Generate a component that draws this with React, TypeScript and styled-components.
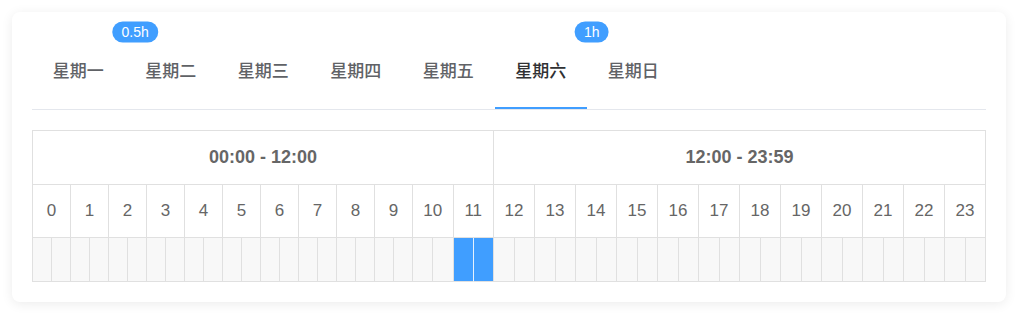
import { useState } from 'react';
import styled, { createGlobalStyle } from 'styled-components';

const GlobalStyle = createGlobalStyle`
	html, body {
		margin: 0;
		padding: 0;
		background: #fff;
	}
	body {
		font-family: 'Liberation Sans', Arial, 'Noto Sans CJK SC', sans-serif;
	}
	* {
		box-sizing: border-box;
	}
`;

type Day = {
	label: string;
	slots: number[];
};

const days: Day[] = [
	{ label: '星期一', slots: [17] },
	{ label: '星期二', slots: [] },
	{ label: '星期三', slots: [] },
	{ label: '星期四', slots: [] },
	{ label: '星期五', slots: [] },
	{ label: '星期六', slots: [22, 23] },
	{ label: '星期日', slots: [] },
];

const hours = Array.from({ length: 24 }, (_, i) => i);
const halfSlots = Array.from({ length: 48 }, (_, i) => i);

export default function App() {
	const [active, setActive] = useState(5);
	const selected = days[active].slots;

	return (
		<>
			<GlobalStyle />
			<Page>
				<Card>
					<TabBar>
						{days.map((day, i) => (
							<TabItem
								key={day.label}
								$active={i === active}
								onClick={() => setActive(i)}
							>
								{day.label}
								{!!day.slots.length && (
									<Badge>{day.slots.length / 2}h</Badge>
								)}
							</TabItem>
						))}
					</TabBar>

					<Schedule>
						<RangeCell $span={24}>00:00 - 12:00</RangeCell>
						<RangeCell $span={24}>12:00 - 23:59</RangeCell>
						{hours.map((h) => (
							<HourCell key={h}>{h}</HourCell>
						))}
						{halfSlots.map((s) => {
							const on = selected.includes(s);
							return (
								<SlotCell
									key={s}
									$on={on}
									$pairOn={on && s % 2 === 0 && selected.includes(s + 1)}
								/>
							);
						})}
					</Schedule>
				</Card>
			</Page>
		</>
	);
}

const Page = styled.div`
	padding: 12px 11px 14px 12px;
`;

const Card = styled.div`
	width: 994px;
	padding: 20px;
	background: #fff;
	border-radius: 8px;
	box-shadow: 0 2px 12px 0 rgba(0, 0, 0, 0.08);
`;

const TabBar = styled.div`
	display: flex;
	border-bottom: 1px solid #e4e7ed;
	margin-bottom: 20px;
`;

const TabItem = styled.div<{ $active: boolean }>`
	position: relative;
	width: 92.5px;
	height: 77px;
	display: flex;
	align-items: center;
	justify-content: center;
	font-family: 'Noto Sans CJK SC', sans-serif;
	font-size: 17px;
	font-weight: 500;
	color: ${({ $active }) => ($active ? '#303133' : '#606266')};
	cursor: pointer;
	border-bottom: 2px solid
		${({ $active }) => ($active ? '#409eff' : 'transparent')};
`;

const Badge = styled.span`
	position: absolute;
	top: 0;
	right: 12px;
	transform: translate(100%, -50%);
	height: 21px;
	padding: 0 9px;
	border-radius: 11px;
	background: #409eff;
	color: #fff;
	font-family: 'Liberation Sans', Arial, sans-serif;
	font-size: 14px;
	line-height: 21px;
	white-space: nowrap;
`;

const Schedule = styled.div`
	display: grid;
	grid-template-columns: repeat(20, 19px) repeat(4, 20.25px) repeat(24, 1fr);
	border-top: 1px solid #e0e0e0;
	border-left: 1px solid #e0e0e0;
	color: #666;
`;

const RangeCell = styled.div<{ $span: number }>`
	grid-column: span ${({ $span }) => $span};
	height: 54px;
	display: flex;
	align-items: center;
	justify-content: center;
	font-size: 18px;
	font-weight: 700;
	border-right: 1px solid #e0e0e0;
	border-bottom: 1px solid #e0e0e0;
`;

const HourCell = styled.div`
	grid-column: span 2;
	height: 53px;
	display: flex;
	align-items: center;
	justify-content: center;
	font-size: 17px;
	border-right: 1px solid #e0e0e0;
	border-bottom: 1px solid #e0e0e0;
`;

const SlotCell = styled.div<{ $on: boolean; $pairOn: boolean }>`
	height: 44px;
	background: ${({ $on }) => ($on ? '#409eff' : '#f8f8f8')};
	border-right: 1px solid ${({ $pairOn }) => ($pairOn ? '#e6f1fd' : '#e0e0e0')};
	border-bottom: 1px solid #e0e0e0;
`;
